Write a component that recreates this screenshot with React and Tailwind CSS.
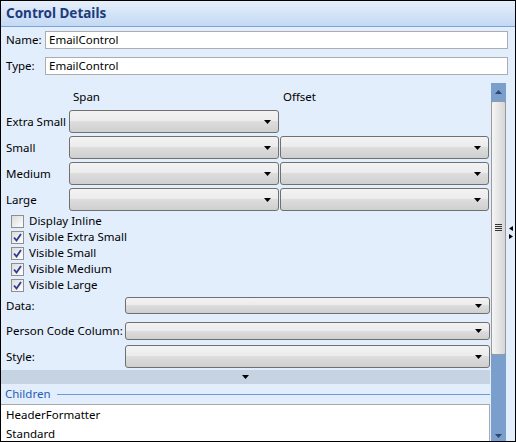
// Control Details panel
const font = { fontFamily: '"Noto Sans", "Open Sans", sans-serif' };

function Arrow() {
  return (
    <svg width="7" height="4" viewBox="0 0 7 4" className="shrink-0">
      <path d="M0 0H7L3.5 4Z" fill="#000" />
    </svg>
  );
}

function Combo({ className = '' }) {
  return (
    <div
      className={`shrink-0 flex items-center justify-end pr-[7px] rounded-[3px] border border-[#707070] bg-[linear-gradient(#f3f3f3,#ebebeb_50%,#dddddd_50%,#cfcfcf)] ${className}`}
    >
      <Arrow />
    </div>
  );
}

function Check({ checked, label }) {
  return (
    <div className="h-[16px] shrink-0 flex items-center pl-[10px]">
      <div className="w-[13px] h-[13px] border border-[#8e8f8f] bg-[linear-gradient(135deg,#dcdcdc,#ffffff)] p-[1px] flex items-center justify-center">
        {checked && (
          <svg width="9" height="9" viewBox="0 0 9 9">
            <path d="M1 4.5L3.5 7.5L8 1" fill="none" stroke="#2f3a8f" strokeWidth="1.8" />
          </svg>
        )}
      </div>
      <span className="ml-[5px] text-[11.5px] leading-none">{label}</span>
    </div>
  );
}

const sizes = ['Extra Small', 'Small', 'Medium', 'Large'];

export default function App() {
  return (
    <div
      style={font}
      className="w-[516px] h-[442px] border border-black bg-[#e3eefc] flex flex-col overflow-hidden text-black"
    >
      <div className="h-[26px] shrink-0 bg-gradient-to-b from-[#e6effb] to-[#c3d9f4] border-b border-[#7ba4d8] flex items-center pl-[5px]">
        <span className="font-bold text-[13.5px] text-[#1d3c7c]">Control Details</span>
      </div>

      <div className="flex shrink-0 items-center mt-[4px] h-[18px] pr-[7px]">
        <span className="w-[44px] pl-[5px] text-[11.5px]">Name:</span>
        <div className="flex-1 h-[18px] bg-white border border-[#abadb3] flex items-center pl-[3px] text-[11.5px]">
          EmailControl
        </div>
      </div>
      <div className="flex shrink-0 items-center mt-[8px] h-[18px] pr-[7px]">
        <span className="w-[44px] pl-[5px] text-[11.5px]">Type:</span>
        <div className="flex-1 h-[18px] bg-white border border-[#abadb3] flex items-center pl-[3px] text-[11.5px]">
          EmailControl
        </div>
      </div>

      <div className="flex mt-[8px] flex-1 min-h-0">
        <div className="w-[489px] flex flex-col text-[11.5px] overflow-hidden">
          <div className="h-[27px] shrink-0 flex items-center">
            <span className="ml-[72px]">Span</span>
            <span className="ml-[183px]">Offset</span>
          </div>
          <div className="flex shrink-0 flex-col gap-[3px]">
            {sizes.map((s, i) => (
              <div key={s} className="flex items-center h-[23px]">
                <span className="w-[68px] pl-[5px]">{s}</span>
                <Combo className="w-[210px] h-[23px]" />
                {i > 0 && <Combo className="w-[209px] h-[23px] ml-[1px]" />}
              </div>
            ))}
          </div>
          <div className="mt-[2px] shrink-0">
            <Check label="Display Inline" />
            <Check checked label="Visible Extra Small" />
            <Check checked label="Visible Small" />
            <Check checked label="Visible Medium" />
            <Check checked label="Visible Large" />
          </div>
          <div className="flex shrink-0 items-center h-[17px] mt-[4px]">
            <span className="w-[124px] pl-[5px]">Data:</span>
            <Combo className="flex-1 h-[17px]" />
          </div>
          <div className="flex shrink-0 items-center h-[18px] mt-[8px]">
            <span className="w-[124px] pl-[5px]">Person Code Column:</span>
            <Combo className="flex-1 h-[18px]" />
          </div>
          <div className="flex shrink-0 items-center h-[23px] mt-[5px]">
            <span className="w-[124px] pl-[5px]">Style:</span>
            <Combo className="flex-1 h-[23px]" />
          </div>
          <div className="h-[14px] shrink-0 mt-[2px] bg-[#c6d3e3] flex items-center justify-center">
            <Arrow />
          </div>
          <div className="h-[20px] shrink-0 flex items-center pl-[4px]">
            <span className="text-[#1f5cb8]">Children</span>
            <div className="flex-1 h-px bg-[#6e9bd6] ml-[6px]" />
          </div>
          <div className="flex-1 min-h-0 bg-white border-t border-r border-[#a9a9a9] pl-[5px]">
            <div className="h-[19px] flex items-center">HeaderFormatter</div>
            <div className="h-[19px] flex items-center">Standard</div>
          </div>
        </div>

        <div className="w-[15px] ml-[1px] flex flex-col bg-[#7b9fcd]">
          <div className="h-[18px] shrink-0 flex items-center justify-center">
            <svg width="7" height="4" viewBox="0 0 7 4">
              <path d="M0 4H7L3.5 0Z" fill="#2a4775" />
            </svg>
          </div>
          <div className="h-[254px] shrink-0 rounded-[2px] border border-[#9a9a9a] bg-[linear-gradient(90deg,#f5f5f5,#e6e6e6_50%,#d6d6d6)] flex items-center justify-center">
            <div className="flex flex-col gap-[1px] mt-[-2px]">
              <div className="w-[7px] h-[1px] bg-[#333]" />
              <div className="w-[7px] h-[1px] bg-[#333]" />
              <div className="w-[7px] h-[1px] bg-[#333]" />
              <div className="w-[7px] h-[1px] bg-[#333]" />
            </div>
          </div>
          <div className="flex-1 flex items-end justify-center pb-[3px]">
            <svg width="7" height="4" viewBox="0 0 7 4">
              <path d="M0 0H7L3.5 4Z" fill="#2a4775" />
            </svg>
          </div>
        </div>

        <div className="flex-1 flex flex-col items-center pt-[143px] gap-[3px]">
          <svg width="4" height="5" viewBox="0 0 4 5">
            <path d="M4 0V5L0 2.5Z" fill="#000" />
          </svg>
          <svg width="4" height="5" viewBox="0 0 4 5">
            <path d="M0 0V5L4 2.5Z" fill="#000" />
          </svg>
        </div>
      </div>
    </div>
  );
}
